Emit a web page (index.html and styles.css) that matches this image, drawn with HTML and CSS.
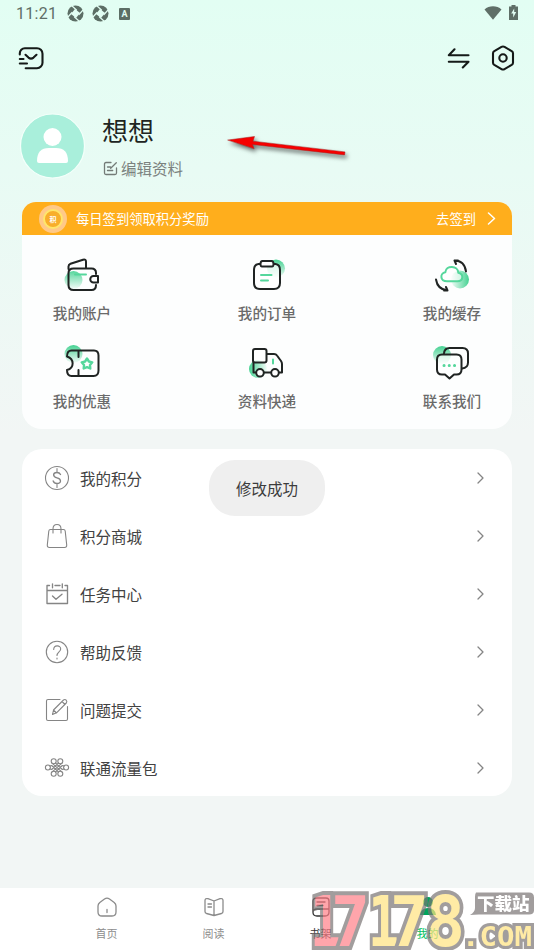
FILE: index.html
```html
<!DOCTYPE html>
<html lang="zh-CN">
<head>
<meta charset="utf-8">
<meta name="viewport" content="width=device-width, initial-scale=1">
<title>我的</title>
<link rel="stylesheet" href="styles.css">
</head>
<body>
<div class="app">
  <div class="status">
    <span class="clock">11:21</span>
    <svg class="swirl" width="17" height="17" viewBox="0 0 17 17"><circle cx="8.500" cy="8.500" r="8"/><path class="hole" d="M8 4l5 4-4 5-5-4z"/><path class="cut" d="M9.500 5L4.500.5M12 9.500l4.500-5M7.500 12l5 4.500M5 7.500l-4.500 5"/></svg>
    <svg class="swirl second" width="17" height="17" viewBox="0 0 17 17"><circle cx="8.500" cy="8.500" r="8"/><path class="hole" d="M8 4l5 4-4 5-5-4z"/><path class="cut" d="M9.500 5L4.500.5M12 9.500l4.500-5M7.500 12l5 4.500M5 7.500l-4.500 5"/></svg>
    <span class="badge-a">A</span>
    <svg class="wifi" width="18" height="14" viewBox="0 0 18 14"><path d="M.5 3.500C5-.7 13-.7 17.500 3.500L9 13.800z"/></svg>
    <svg class="battery" width="9" height="15" viewBox="0 0 9 15"><path d="M2.500 0h4v1.500H9V15H0V1.500h2.500z"/><path class="bolt" d="M5.200 3.500L2.200 8.500h2v4l3-5.500h-2z"/></svg>
  </div>

  <header class="topbar">
    <svg class="line mail" width="26" height="23" viewBox="0 0 26 23"><path d="M1.800 7.500V6.200a5 5 0 0 1 5-5H19a5.500 5.500 0 0 1 5.500 5.500v9A5.500 5.500 0 0 1 19 21.200H7.700M1.800 12H5.500M1.800 16.500H9M7.500 7.800l3 2.800q2.500 2.200 5 0l3-2.800"/></svg>
    <svg class="line swap" width="23" height="21" viewBox="0 0 23 21"><path d="M21.500 7.200H1.800L7.500 1.300M1.800 13.700H21.500L15.800 19.500"/></svg>
    <svg class="line gear" width="24" height="26" viewBox="0 0 24 26"><path d="M10.500 1.900q1.500-.9 3 0l7.200 4.200q1.300.8 1.300 2.200v9.400q0 1.400-1.300 2.200l-7.200 4.200q-1.500.9-3 0l-7.200-4.200Q2 19.100 2 17.700V8.300q0-1.400 1.300-2.200z"/><circle cx="12" cy="13" r="3.700"/></svg>
  </header>

  <section class="profile">
    <svg class="avatar" width="66" height="66" viewBox="0 0 66 66"><circle class="disc" cx="32.500" cy="33" r="32"/><circle class="person" cx="32.500" cy="24" r="9"/><path class="person" d="M17 48q0-13 12-13h7q12 0 12 13 0 2-2 2h-27q-2 0-2-2z"/></svg>
    <div class="who">
      <div class="name">想想</div>
      <div class="edit"><svg width="15" height="15" viewBox="0 0 15 15"><path d="M8 1.500H3Q1.500 1.500 1.500 3v9q0 1.500 1.500 1.500h9q1.500 0 1.500-1.500V7M4.500 6h3M4.500 9.500h5.200M7.700 7.300l5.600-5.600"/></svg><span>编辑资料</span></div>
    </div>
    <svg class="pointer" width="130" height="36" viewBox="0 0 130 36"><path d="M6 12L32.500 8.500 31 13.200l92 10.700-.4 3L30.500 16.500 32 20.500z"/></svg>
  </section>

  <section class="card services">
    <div class="banner">
      <span class="coin"><span>积</span></span>
      <span class="promo">每日签到领取积分奖励</span>
      <span class="go">去签到</span>
      <svg class="arrow" width="9" height="13" viewBox="0 0 9 13"><path d="M1.500 1l6 5.500-6 5.500"/></svg>
    </div>
    <div class="grid">
      <div class="tile"><svg viewBox="0 0 40 40"><defs><linearGradient id="down" x2="0" y2="1"><stop stop-color="#45d292"/><stop offset="1" stop-color="#45d292" stop-opacity=".05"/></linearGradient><linearGradient id="up" x2="0" y1="0" y2="1"><stop stop-color="#45d292" stop-opacity=".9"/><stop offset="1" stop-color="#45d292" stop-opacity=".05"/></linearGradient><linearGradient id="left" x1="1" x2="0"><stop stop-color="#45d292"/><stop offset="1" stop-color="#45d292" stop-opacity=".05"/></linearGradient><linearGradient id="right"><stop stop-color="#45d292"/><stop offset="1" stop-color="#45d292" stop-opacity=".05"/></linearGradient></defs>
        <circle cx="11.500" cy="25" r="9" fill="url(#up)"/><path class="ink" d="M6.500 14V11.500q0-2 2-2.700L21 4.700q3-.9 3 2V13M34 19v-1q0-4.500-4.500-4.500h-18Q6.500 13.500 6.500 18v12q0 5 5 5h18q4.500 0 4.500-5"/><path class="ink white" d="M36 21h-4.500a3.200 3.200 0 0 0 0 6.500H36z"/><path class="mint" d="M13 19.500h11"/></svg><span>我的账户</span></div>
      <div class="tile"><svg viewBox="0 0 40 40"><circle cx="29" cy="13.500" r="9" fill="url(#down)"/><path class="ink frost" d="M11.500 9h17Q33 9.500 33 15v13q0 6-6 6H13q-6 0-6-6V15q0-5.500 4.500-6z"/><path class="ink white" d="M15.500 6h9q2 0 2 3t-2 2.500h-9q-2 .5-2-2.500t2-3z"/><path class="mint" d="M14 20h10.500M14 25.500h7"/></svg><span>我的订单</span></div>
      <div class="tile"><svg viewBox="0 0 40 40"><circle cx="28" cy="24.500" r="9" fill="url(#left)"/><path class="mint cloud" d="M13.500 26.300H24c6 0 6.500-7.500.8-8.500-.2-7.500-12.300-8-13-.5-5.500.8-5.500 9 1.700 9z" transform="translate(-.5 0)"/><path class="ink" d="M24 9l-1.500-3.500q10 0 11.500 11M4 24.500q1.500 10 11.500 11l-1.500-3.500M22.500 5.500h3.500M15.500 35.500H12"/></svg><span>我的缓存</span></div>
      <div class="tile"><svg viewBox="0 0 40 40"><circle cx="11.500" cy="11" r="9" fill="url(#down)"/><path class="ink" d="M9.500 7.500H32q4.500 0 4.500 5v15q0 5.500-5 5.500H9.500Q5 33 5 27c7.500-2 7.500-11 0-13.500Q5 7.500 9.500 7.500zM16.500 8v6M16.500 27v5.500"/><path class="mint star" d="M25 15.500l1.900 3 3.400.8-2.300 2.700.3 3.500-3.300-1.400-3.300 1.400.3-3.500-2.300-2.700 3.400-.8z"/></svg><span>我的优惠</span></div>
      <div class="tile"><svg viewBox="0 0 40 40"><circle cx="11" cy="26" r="9" fill="url(#right)"/><path class="ink" d="M20 11h7q2 0 3 1.500l4 5.500q1 1.500 1 3v8.500h-2.500M6.500 19v10.500h2M17.500 29.500h6"/><path class="ink frost" d="M8 6h9.500q2 0 2 2v9.500q0 2-2 2H8q-2 0-2-2V8q0-2 2-2z"/><circle class="ink white" cx="13" cy="29.800" r="3.800"/><circle class="ink white" cx="28" cy="29.800" r="3.800"/><path class="mint" d="M26 16.500v4"/></svg><span>资料快递</span></div>
      <div class="tile"><svg viewBox="0 0 40 40"><circle cx="10" cy="12" r="9" fill="url(#down)"/><path class="ink" d="M12 10.500q.5-5.500 5.500-5.500h13q5.500 0 5.500 5.500v9q0 5.500-6 6"/><path class="ink bubble" d="M10 11.500h14.500q5 0 5 5v10q0 5-5 5H22l-4.500 4-4.500-4h-3q-5 0-5-5v-10q0-5 5-5z"/><path class="mint dots" d="M12 22.500h.1M17.200 22.500h.1M22.500 22.500h.1"/></svg><span>联系我们</span></div>
    </div>
  </section>

  <section class="card menu">
    <div class="row"><svg class="ico" viewBox="0 0 26 26"><circle cx="13" cy="13" r="11.500"/><path d="M13 3.500v3M13 19.500v3"/><path class="bold" d="M16.500 9.500Q15.500 7.500 13 7.500c-4.500 0-4.500 4.500 0 5.300s4.800 5.700 0 5.700q-3 0-3.800-2.500"/></svg><span>我的积分</span><svg class="chev" viewBox="0 0 7 12"><path d="M1 1l5 5-5 5"/></svg></div>
    <div class="row"><svg class="ico" viewBox="0 0 26 26"><path d="M6.500 6.500h13q1.500 0 1.700 1.500l1.500 14q.2 2.500-2.200 2.500h-15q-2.400 0-2.200-2.500L4.800 8Q5 6.500 6.500 6.500zM9 10V6q0-4.500 4-4.500T17 6v4"/></svg><span>积分商城</span><svg class="chev" viewBox="0 0 7 12"><path d="M1 1l5 5-5 5"/></svg></div>
    <div class="row"><svg class="ico" viewBox="0 0 26 26"><path class="bold" d="M5.500 4.500H3v18h20.500v-18H21M3 9.500h20.500M11 4.500h5M8.500 2.800v4M18.300 2.800v4M8.500 15l3.500 3.300 6-5"/></svg><span>任务中心</span><svg class="chev" viewBox="0 0 7 12"><path d="M1 1l5 5-5 5"/></svg></div>
    <div class="row"><svg class="ico" viewBox="0 0 26 26"><circle cx="13" cy="13" r="10.700"/><path d="M9.700 10.500c0-4.800 7-4.800 7-.5 0 2.800-3.700 3-3.700 6.500M13 19v1"/></svg><span>帮助反馈</span><svg class="chev" viewBox="0 0 7 12"><path d="M1 1l5 5-5 5"/></svg></div>
    <div class="row"><svg class="ico" viewBox="0 0 26 26"><path d="M16 2.500H4Q2.500 2.500 2.500 4v18q0 1.500 1.500 1.500h18q1.500 0 1.500-1.500V9.500M8.500 17.500l1-4.500L19.500 3q1.500-1 2.700.2t.1 2.800L12.500 15.800zM18 4.500l3 3M9.500 13l3 3"/></svg><span>问题提交</span><svg class="chev" viewBox="0 0 7 12"><path d="M1 1l5 5-5 5"/></svg></div>
    <div class="row"><svg class="ico" viewBox="0 0 26 26"><circle cx="3.900" cy="12.500" r="2.500"/><circle cx="22.100" cy="12.500" r="2.500"/><circle cx="9.700" cy="6.200" r="2.500"/><circle cx="16.300" cy="6.200" r="2.500"/><circle cx="9.700" cy="18.800" r="2.500"/><circle cx="16.300" cy="18.800" r="2.500"/><path d="M8 8.200l9.800 8.600M18 8.200l-9.800 8.600M11.500 8l6.800 6.500M14.500 8l-6.800 6.500M11.500 17l6.800-6.500M14.500 17l-6.800-6.500M5.800 11l2-.5M5.800 14l2 .5M20.200 11l-2-.5M20.200 14l-2 .5"/></svg><span>联通流量包</span><svg class="chev" viewBox="0 0 7 12"><path d="M1 1l5 5-5 5"/></svg></div>
    <div class="toast">修改成功</div>
  </section>

  <nav class="tabs">
    <div class="tab"><svg viewBox="0 0 22 22"><path d="M8.500 3q2.500-1.800 5 0l4.700 3.500Q20 8 20 10v6q0 4-4 4H6q-4 0-4-4v-6q0-2 1.800-3.500zM11 13.500v3"/></svg><span>首页</span></div>
    <div class="tab"><svg viewBox="0 0 22 22"><path d="M11 5l-6-2.300Q2 2 2 4.500v11q0 1.500 1.500 2L11 19.500l7.500-2q1.500-.5 1.500-2v-11Q20 2 17 2.700zM11 5v14.500M5 8h3.500M5 11h3.500"/></svg><span>阅读</span></div>
    <div class="tab shelf"><svg viewBox="0 0 22 22"><path d="M7 2h9q3 0 3 3v11q0 4-4 4H7q-4 0-4-3.500V5q0-3 4-3zM3 16q0-3 4-3h12M7 6h8M7 9.500h6"/></svg><span>书架</span></div>
    <div class="tab active"><svg viewBox="0 0 22 22"><circle cx="11" cy="6" r="5"/><path d="M3 19q1-7 8-7t8 7z"/></svg><span>我的</span></div>
  </nav>

  <div class="watermark">
    <svg width="224" height="62" viewBox="0 0 224 62">
      <g class="digits">
        <text class="pink" x="0" y="58" textLength="31" lengthAdjust="spacingAndGlyphs">1</text>
        <text class="pink" x="21" y="58" textLength="39" lengthAdjust="spacingAndGlyphs">7</text>
        <text x="58" y="58" textLength="31" lengthAdjust="spacingAndGlyphs">1</text>
        <text x="80" y="58" textLength="39" lengthAdjust="spacingAndGlyphs">7</text>
        <text x="116" y="58" textLength="39" lengthAdjust="spacingAndGlyphs">8</text>
      </g>
      <text class="com" x="152" y="58" textLength="70" lengthAdjust="spacingAndGlyphs">.COM</text>
      <path class="tag" d="M166 4.500h53q5 0 5 5v13q0 4-5 4h-50l-9 .5q5-3 5-7v-11q0-3.500 1-4.500z"/>
      <text class="site" x="167" y="22">下载站</text>
    </svg>
  </div>
</div>
</body>
</html>
```
FILE: styles.css
```css
* { box-sizing: border-box; }
body { margin: 0; font-family: "Noto Sans CJK SC", sans-serif; color: #333; }
svg { display: block; flex: none; fill: none; stroke-linecap: round; stroke-linejoin: round; }
.app { position: relative; width: 534px; height: 950px; overflow: hidden; display: flex; flex-direction: column; background: linear-gradient(#e2fef3 0, #e8fbf4 170px, #f2f6f5 435px); }

.status { height: 28px; padding: 0 15px; display: flex; align-items: center; color: #5f7068; }
.clock { font: 400 16px/28px Roboto, sans-serif; letter-spacing: .3px; width: 52px; padding-left: 1px; color: #5f6e67; }
.swirl { fill: #5c6e65; margin-top: -1px; }
.swirl.second { margin-left: 8px; }
.swirl .hole { fill: #e2fef3; }
.swirl .cut { stroke: #e2fef3; stroke-width: 1.2; }
.badge-a { width: 11px; height: 12px; margin-left: 10px; margin-top: -1px; border-radius: 1px; background: #5c6e65; color: #e2fef3; font: 700 9px/12px Roboto, sans-serif; text-align: center; }
.wifi { margin-left: auto; margin-top: -3px; fill: #5f6f67; }
.battery { margin: -3px 1px 0 7px; fill: #5f6f67; }
.bolt { fill: #e2fef3; }

.topbar { height: 60px; padding: 0 19px 0 18px; display: flex; align-items: center; }
.line { stroke: #151a18; stroke-width: 2.1; }
.swap { margin-left: auto; margin-right: 21px; }

.profile { position: relative; height: 114px; padding: 25px 20px 0; display: flex; gap: 16px; }
.name { font-size: 26px; line-height: 34px; color: #202422; }
.edit { margin-top: 9px; display: flex; align-items: center; gap: 3px; font-size: 15.5px; line-height: 24px; color: #7b827f; }
.edit svg { stroke: #737b77; stroke-width: 1.3; margin-left: 1px; }
.disc { fill: #a9efdb; stroke: #f3fffa; stroke-width: 1.2; }
.person { fill: #fff; }
.pointer { position: absolute; left: 222px; top: 39.5px; fill: #f60000; filter: drop-shadow(2px 3px 2px rgba(0, 0, 0, .55)); }
.pointer path { stroke: #a62020; stroke-width: .5; }

.card { margin: 0 22px; background: #fdfefe; overflow: hidden; flex: none; }
.services { height: 227px; border-radius: 14px 14px 20px 20px; }
.banner { height: 33px; padding: 0 16px 0 17px; display: flex; align-items: center; background: #ffae1c; color: #fff; font-size: 13.3px; line-height: 33px; }
.coin { width: 28px; height: 28px; display: grid; place-items: center; border-radius: 50%; background: #ffc988; margin-top: 1px; }
.coin span { width: 20px; height: 20px; border: 2px solid #ffe66b; border-radius: 50%; background: #f8ae2b; font-size: 7px; font-weight: 700; line-height: 16px; text-align: center; }
.promo { margin-left: 9px; }
.go { margin-left: auto; margin-right: 11px; }
.arrow { stroke: #fff; stroke-width: 1.5; }
.grid { padding: 20px 29px 0; display: grid; grid-template-columns: repeat(3, 62px); justify-content: space-between; grid-auto-rows: 88px; }
.tile { display: flex; flex-direction: column; align-items: center; font-size: 14.6px; font-weight: 500; line-height: 22px; color: #6a6a6a; white-space: nowrap; }
.tile svg { width: 40px; height: 40px; margin-bottom: 7px; }
.ink { stroke: #202423; stroke-width: 2; }
.white { fill: #fff; }
.frost { fill: #fffb; }
.bubble { fill: #fff9; }
.mint { stroke: #55d79c; stroke-width: 2; }
.star { stroke-width: 2.4; }
.cloud { fill: #fff9; transform: translate(1.5px, 0); }
.dots { stroke-width: 3; }

.menu { position: relative; margin-top: 20px; height: 347px; border-radius: 20px; background: #fff; }
.row { height: 58px; padding: 0 28px 0 22px; display: flex; align-items: center; font-size: 15.5px; color: #424242; }
.row span { margin-left: 10px; }
.ico { width: 26px; height: 26px; stroke: #858585; stroke-width: 1.1; }
.ico .bold { stroke-width: 1.35; }
.chev { width: 7px; height: 12px; margin-left: auto; stroke: #858585; stroke-width: 1.3; }
.toast { position: absolute; left: 187px; top: 11px; width: 116px; height: 56px; border-radius: 26px; background: #efefef; color: #3c3c3c; font-size: 15.5px; line-height: 57px; text-align: center; }

.tabs { margin-top: auto; height: 62px; padding: 0 53px; display: flex; background: #fff; flex: none; }
.tab { flex: 1; display: flex; flex-direction: column; align-items: center; padding-top: 8px; font-size: 11px; line-height: 16px; color: #8d8d8d; }
.tab svg { width: 22px; height: 22px; margin-bottom: 7px; stroke: #8b8b8b; stroke-width: 1.3; }
.tab.shelf { color: #333; }
.tab.shelf svg { stroke: #333; }
.tab.active { color: #00c060; }
.tab.active svg { fill: #00a45c; stroke: none; }

.watermark { position: absolute; left: 310px; top: 888px; opacity: .7; }
.watermark svg { overflow: visible; }
.watermark text { paint-order: stroke; stroke: #7a7575; stroke-linejoin: miter; }
.digits { font: 700 70px "DejaVu Sans Mono", monospace; stroke-width: 8px; fill: #ffe37f; }
.digits .pink { fill: #ff7f88; }
.com { font: 700 26px "DejaVu Sans Mono", monospace; stroke-width: 6px; fill: #ffe37f; }
.tag { fill: #7a7575; }
.watermark .site { font: 900 17.500px "Noto Sans CJK SC", sans-serif; fill: #fff; stroke: none; }
```
